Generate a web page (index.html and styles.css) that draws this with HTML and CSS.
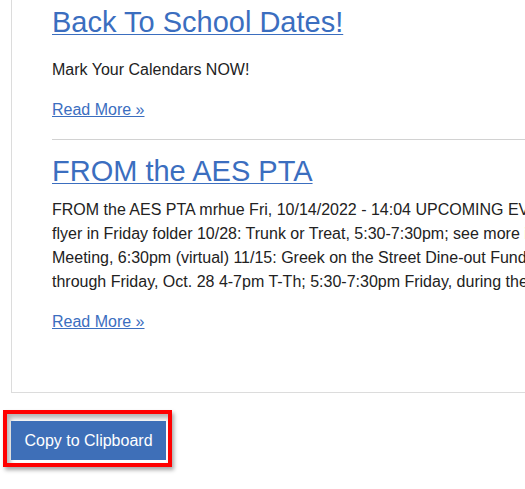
FILE: index.html
```html
<!DOCTYPE html>
<html>
<head>
<meta charset="utf-8">
<link rel="stylesheet" href="styles.css">
</head>
<body>
<div class="feed">
  <article class="post">
    <h2 class="post-title"><a href="#">Back To School Dates!</a></h2>
    <div class="post-body post-body--loose">
      <p>Mark Your Calendars NOW!</p>
    </div>
    <a class="read-more" href="#">Read More »</a>
  </article>
  <hr class="divider">
  <article class="post">
    <h2 class="post-title"><a href="#">FROM the AES PTA</a></h2>
    <div class="post-body">
      <p class="nowrap">FROM the AES PTA mrhue Fri, 10/14/2022 - 14:04 UPCOMING EVENTS 10/24-10/28: Book Fair; see<br>flyer in Friday folder 10/28: Trunk or Treat, 5:30-7:30pm; see more info below 11/1: PTA General<br>Meeting, 6:30pm (virtual) 11/15: Greek on the Street Dine-out Fundraiser BOOK FAIR Monday, Oct. 24<br>through Friday, Oct. 28 4-7pm T-Th; 5:30-7:30pm Friday, during the Trunk or Treat event&hellip;</p>
    </div>
    <a class="read-more" href="#">Read More »</a>
  </article>
</div>
<div class="highlight">
  <button class="copy-btn" type="button">Copy to Clipboard</button>
</div>
</body>
</html>
```
FILE: styles.css
```css
html, body {
  margin: 0;
  padding: 0;
  background: #fff;
}
body {
  font-family: "Liberation Sans", Arial, sans-serif;
  color: #222;
  overflow: hidden;
  width: 525px;
  height: 489px;
}
.feed {
  margin-left: 11px;
  width: 640px;
  border-left: 1px solid #dcdcdc;
  border-bottom: 1px solid #dcdcdc;
  padding: 5.5px 0 58px 40px;
}
.post-title {
  margin: 0;
  font-size: 29px;
  line-height: 33px;
  font-weight: normal;
}
.post-title a {
  color: #3b6ebf;
  text-decoration: underline;
  text-underline-offset: 2px;
  text-decoration-thickness: 1px;
}
.post-body {
  margin-top: 10px;
  font-size: 16px;
  line-height: 24px;
}
.post-body--loose {
  margin-top: 19px;
}
.post-body p {
  margin: 0 0 16px;
}
.nowrap {
  white-space: nowrap;
}
.read-more {
  display: block;
  width: max-content;
  font-size: 16px;
  line-height: 24px;
  color: #3b6ebf;
  text-decoration: underline;
  text-underline-offset: 1px;
}
.divider {
  margin: 17.5px 0 14.5px;
  border: 0;
  border-top: 1px solid #d2d2d2;
  height: 0;
}
.highlight {
  display: inline-block;
  margin: 17px 0 0 3px;
  border: 4px solid #ff0000;
  padding: 7px 2px 3px 4px;
  box-shadow: 2px 3px 4px rgba(0, 0, 0, 0.35), inset 3px 4px 5px rgba(0, 0, 0, 0.3);
  line-height: 0;
}
.copy-btn {
  width: 155px;
  height: 39px;
  margin: 0;
  padding: 0;
  border: 0;
  background: #3e6fb8;
  color: #fff;
  font-family: "Liberation Sans", Arial, sans-serif;
  font-size: 16px;
  line-height: 39px;
}
```
